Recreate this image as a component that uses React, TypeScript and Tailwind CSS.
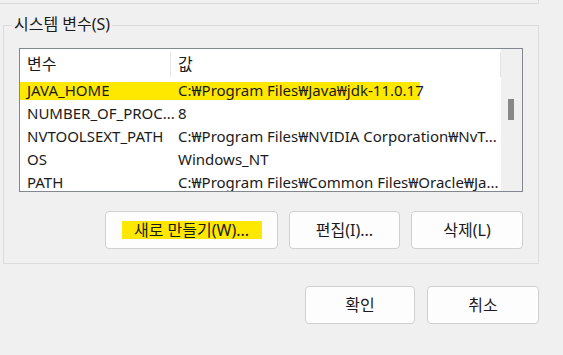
import React from 'react';

const rows = [
  { name: 'JAVA_HOME', value: 'C:₩Program Files₩Java₩jdk-11.0.17', marked: true },
  { name: 'NUMBER_OF_PROC...', value: '8' },
  { name: 'NVTOOLSEXT_PATH', value: 'C:₩Program Files₩NVIDIA Corporation₩NvT...' },
  { name: 'OS', value: 'Windows_NT' },
  { name: 'PATH', value: 'C:₩Program Files₩Common Files₩Oracle₩Ja...' },
];

const Button: React.FC<{ className?: string; children: React.ReactNode }> = ({ className = '', children }) => (
  <button className={`h-[38px] rounded-[4px] border border-[#d0d0d0] bg-[#fdfdfd] flex items-center justify-center text-[16px] text-[#1b1b1b] ${className}`}>
    {children}
  </button>
);

const App: React.FC = () => {
  return (
    <div
      className="w-[563px] h-[355px] bg-[#f0f0f0] overflow-hidden text-[#1b1b1b]"
      style={{ fontFamily: '"Noto Sans", "Noto Sans CJK KR", sans-serif' }}
    >
      {/* previous group, only its bottom edge is visible */}
      <div className="h-[4px] w-[539px] border-b border-r border-[#dcdcdc]" />

      {/* System variables group */}
      <div className="relative ml-[3px] mt-[21px] w-[536px] h-[239px] border border-[#dcdcdc] flex flex-col">
        <div className="absolute left-[8px] -top-[13px] px-[2px] bg-[#f0f0f0] text-[16px] leading-[22px]">
          시스템 변수(S)
        </div>

        {/* list view */}
        <div className="ml-[15px] mt-[22px] w-[504px] h-[144px] border border-[#828790] bg-white flex overflow-hidden">
          <div className="w-[481px] flex flex-col">
            <div className="h-[30px] flex items-center text-[16px] shrink-0">
              <div className="w-[150px] pl-[7px] shrink-0">변수</div>
              <div className="w-px h-[25px] bg-[#e5e5e5] shrink-0" />
              <div className="flex-1 pl-[7px]">값</div>
              <div className="w-px h-[25px] bg-[#e5e5e5] shrink-0" />
            </div>
            {rows.map((r) => (
              <div key={r.name} className="h-[23px] flex items-center shrink-0 text-[15px] whitespace-nowrap">
                <div className={`flex items-center h-[18px] ${r.marked ? 'bg-[#ffe800] w-[400px]' : ''}`}>
                  <div className="w-[151px] pl-[7px] shrink-0">{r.name}</div>
                  <div className="pl-[7px] shrink-0">{r.value}</div>
                </div>
              </div>
            ))}
          </div>
          {/* scrollbar */}
          <div className="w-[21px] bg-[#f0f0f0] pt-[50px] pl-[7px]">
            <div className="w-[6px] h-[21px] bg-[#888888]" />
          </div>
        </div>

        <div className="mt-[19px] pr-[15px] flex justify-end gap-[11px]">
          <Button className="w-[173px]">
            <span className="bg-[#ffe800] w-[140px] h-[18px] flex items-center justify-center">새로 만들기(W)...</span>
          </Button>
          <Button className="w-[111px]">편집(I)...</Button>
          <Button className="w-[112px]">삭제(L)</Button>
        </div>
      </div>

      <div className="mt-[22px] pr-[24px] flex justify-end gap-[12px]">
        <Button className="w-[110px]">확인</Button>
        <Button className="w-[112px]">취소</Button>
      </div>
    </div>
  );
};

export default App;
